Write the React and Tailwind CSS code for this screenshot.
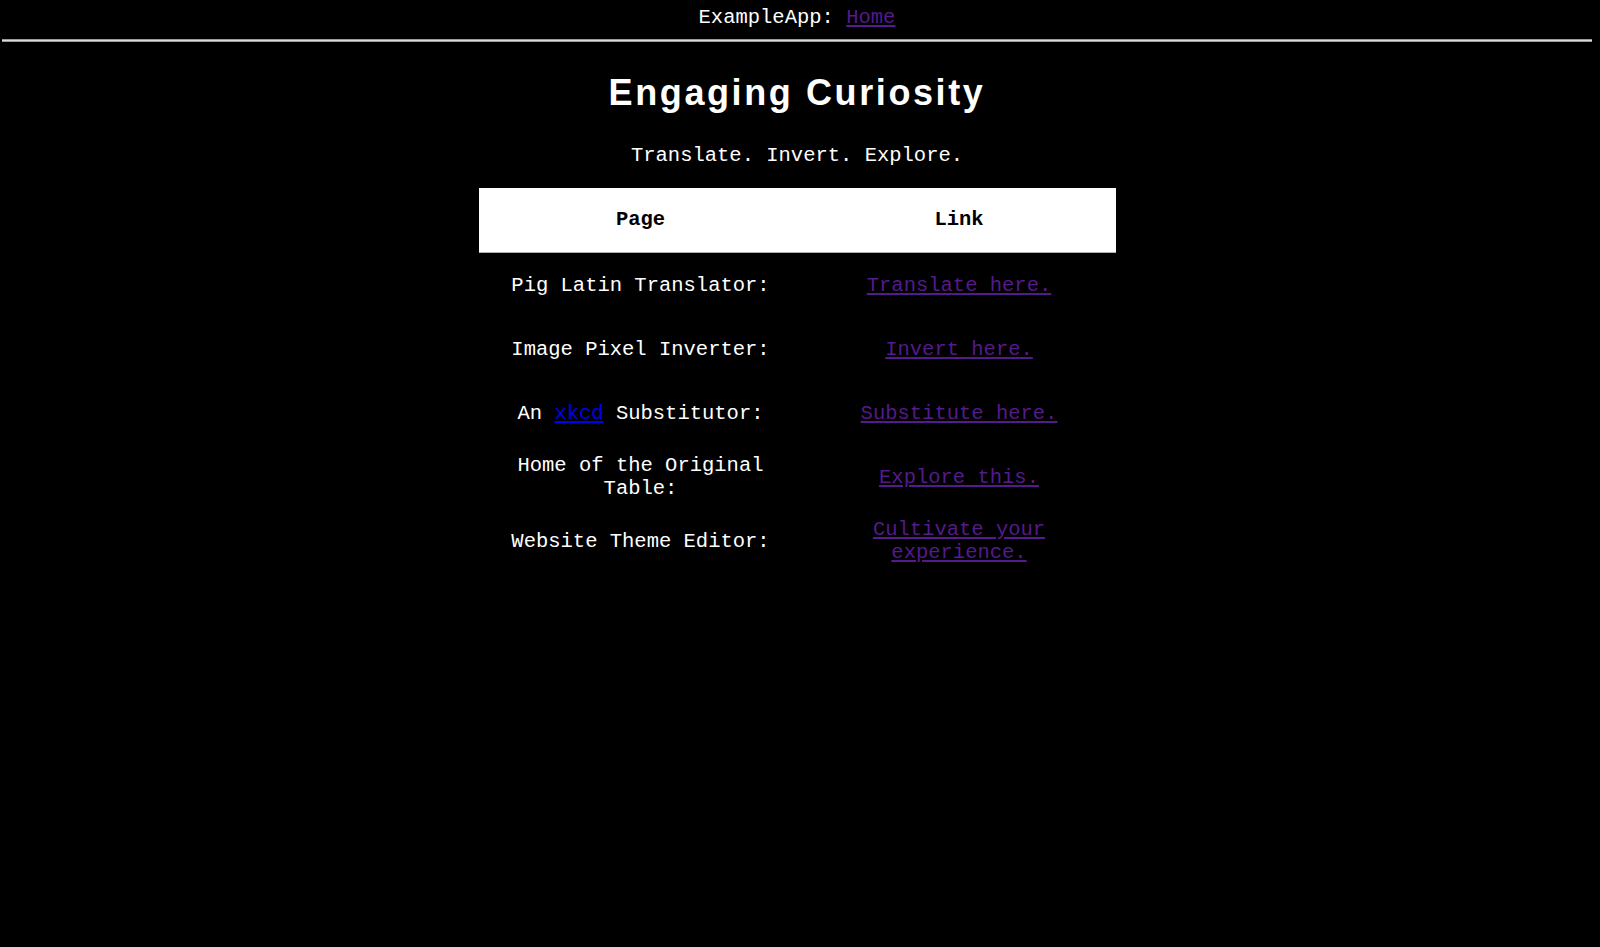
const rows = [
  { page: 'Pig Latin Translator:', link: 'Translate here.' },
  { page: 'Image Pixel Inverter:', link: 'Invert here.' },
  {
    page: (
      <>
        An <a href="#" className="text-[#0000ee] underline">xkcd</a> Substitutor:
      </>
    ),
    link: 'Substitute here.',
  },
  { page: 'Home of the Original Table:', link: 'Explore this.' },
  { page: 'Website Theme Editor:', link: 'Cultivate your experience.' },
];

const App = () => {
  return (
    <div className="min-h-screen bg-black text-white font-['Liberation_Mono',monospace] text-[20.5px] leading-[23px]">
      <div className="ml-[2px] mr-[8px]">
        {/* Top nav */}
        <div className="h-[39px] pt-[6px] text-center">
          ExampleApp:{' '}
          <a href="#" className="text-[#551a8b] underline">
            Home
          </a>
        </div>
        <div className="h-[3px] bg-[#dcdcdc] border-y border-[#9a9a9a]" />

        {/* Title */}
        <h1 className="mt-[33px] text-center font-['Liberation_Sans',Arial,sans-serif] font-bold text-[36px] leading-[36px] tracking-[2.6px]">
          Engaging Curiosity
        </h1>
        <p className="mt-[33px] text-center">Translate. Invert. Explore.</p>

        {/* Table */}
        <div className="mt-[21px] flex justify-center">
          <table className="w-[637px] border-collapse">
            <thead>
              <tr className="bg-white text-black h-[64px] border-b border-[#b0b0b0]">
                <th className="w-[324px] font-bold">Page</th>
                <th className="font-bold">Link</th>
              </tr>
            </thead>
            <tbody>
              {rows.map((r, i) => (
                <tr key={i} className="h-[64px]">
                  <td className="px-[24px] pt-[2px] text-center">{r.page}</td>
                  <td className="px-[24px] pt-[2px] text-center">
                    <a href="#" className="text-[#551a8b] underline">
                      {r.link}
                    </a>
                  </td>
                </tr>
              ))}
            </tbody>
          </table>
        </div>
      </div>
    </div>
  );
};

export default App;
